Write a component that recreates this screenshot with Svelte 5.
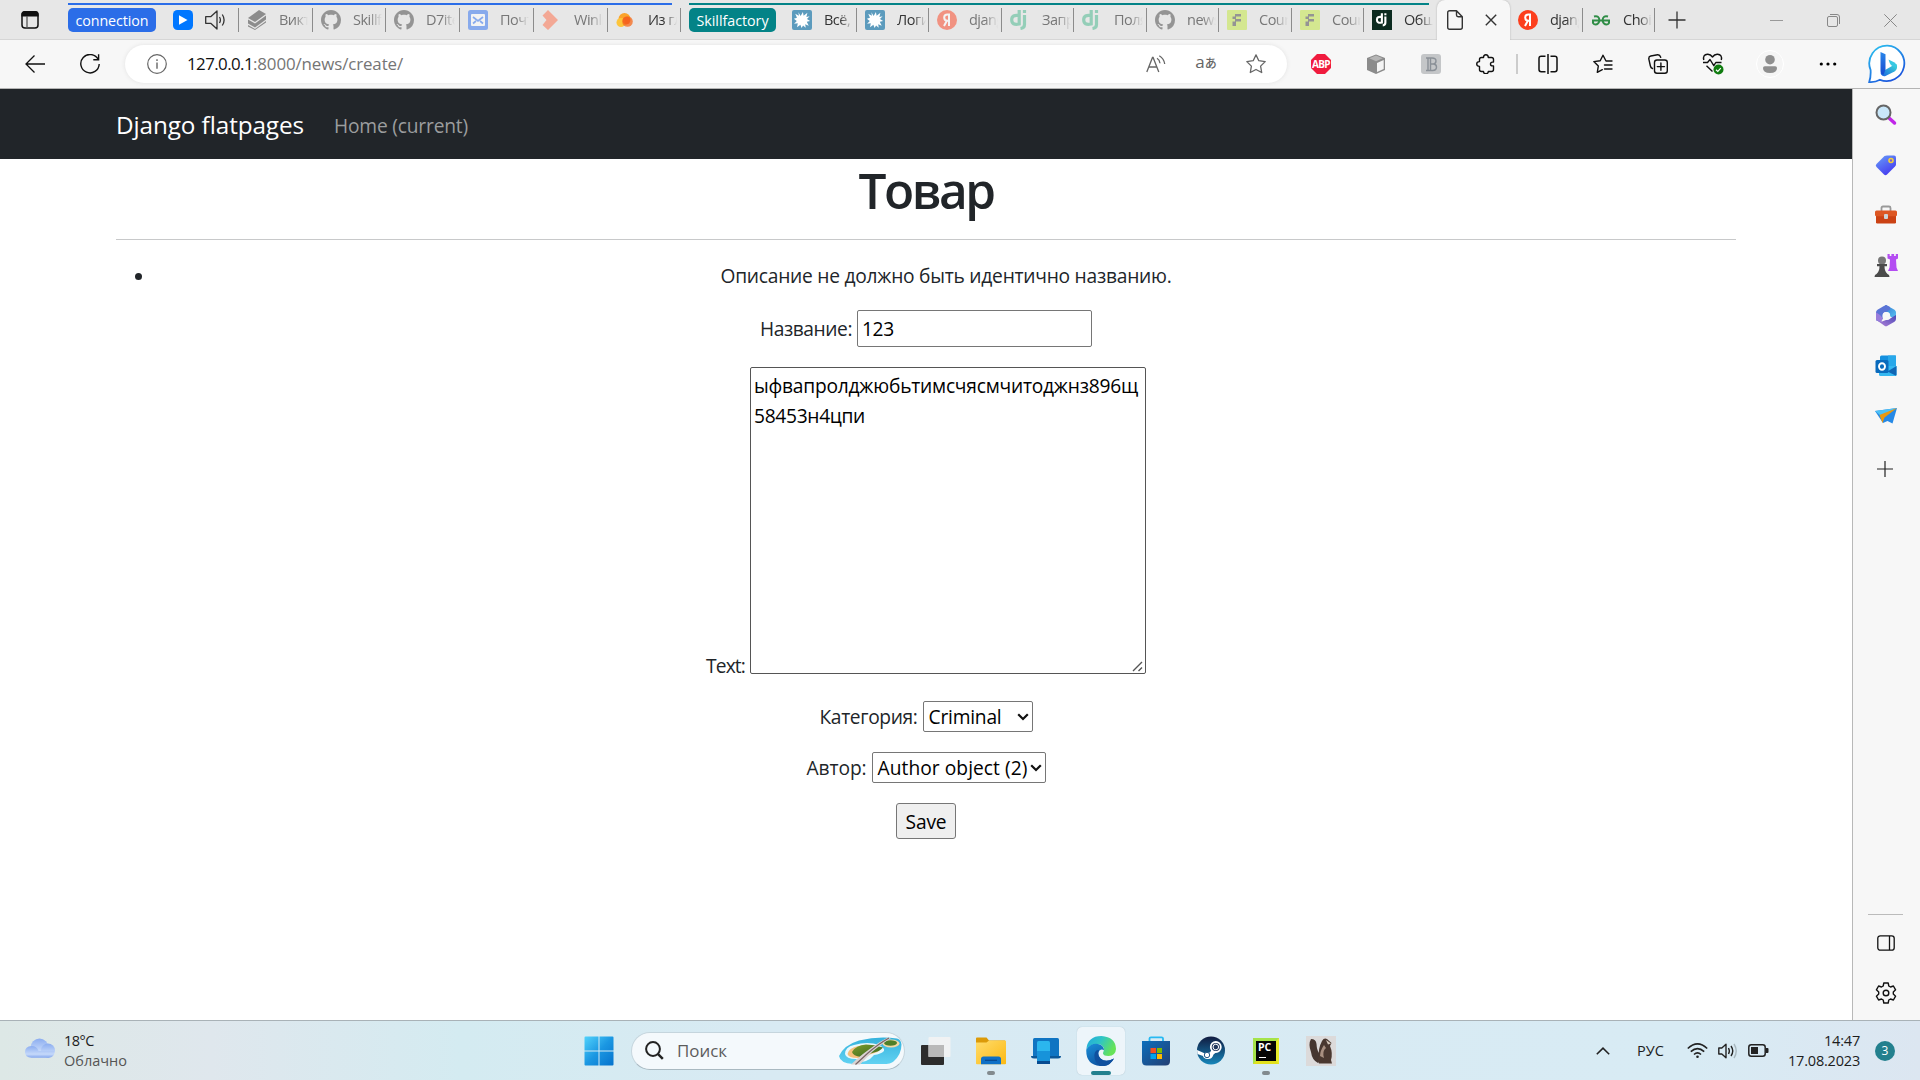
<script>
  // Spreads the letters of a label so that it takes exactly `width` pixels.
  function fit(node, width) {
    const natural = node.getBoundingClientRect().width;
    node.style.letterSpacing = (width - natural) / node.textContent.length + 'px';
  }

  const connectionTabs = [
    { icon: 'layers', text: 'Викт', width: 74, asleep: true },
    { icon: 'github', text: 'Skillf', width: 73, asleep: true },
    { icon: 'github', text: 'D7ite', width: 74, asleep: true },
    { icon: 'mail', text: 'Почт', width: 74, asleep: true },
    { icon: 'winline', text: 'Winli', width: 74, asleep: true },
    { icon: 'clouds', text: 'Из гл', width: 73 }
  ];
  const skillTabs = [
    { icon: 'splat', text: 'Всё, ч', width: 73 },
    { icon: 'splat', text: 'Логи', width: 72 },
    { icon: 'yandex', text: 'djang', width: 73, asleep: true },
    { icon: 'dj', text: 'Запр', width: 72, asleep: true },
    { icon: 'dj', text: 'Поля', width: 73, asleep: true },
    { icon: 'github', text: 'news', width: 72, asleep: true },
    { icon: 'sf', text: 'Cour', width: 73, asleep: true },
    { icon: 'sf', text: 'Cour', width: 72, asleep: true },
    { icon: 'djdark', text: 'Общи', width: 72, last: true }
  ];
  const looseTabs = [
    { icon: 'yandex', text: 'djang', width: 73 },
    { icon: 'gfg', text: 'Choic', width: 72 }
  ];
  const addressIcons = ['read', 'translate', 'star'];
  const extensions = ['abp', 'cube', 'bold', 'puzzle'];
  const tools = ['split', 'favorites', 'collections', 'heart'];
  const sidebar = ['lens', 'tag', 'briefcase', 'chess', 'm365', 'outlook', 'plane'];
  const apps = [
    { icon: 'taskview' },
    { icon: 'folder', running: true },
    { icon: 'phone' },
    { icon: 'edge', active: true },
    { icon: 'store' },
    { icon: 'steam' },
    { icon: 'pycharm', running: true },
    { icon: 'dbeaver' }
  ];
</script>

{#snippet glyph(name)}
  {#if name === 'workspace'}
    <svg width="18" height="18" viewBox="0 0 18 18"><rect x="1" y="1" width="16" height="16" rx="3" fill="none" stroke="#111" stroke-width="1.5" /><path d="M1 5V3.500Q1 .7 3.500.7h11Q17 .7 17 3.500V5z" fill="#111" stroke="#111" stroke-width="1.200" /><path d="M6 5v12" stroke="#555" stroke-width="1.300" /></svg>
  {:else if name === 'play'}
    <svg width="20" height="20" viewBox="0 0 20 20"><rect width="20" height="20" rx="4.500" fill="#07f" /><path d="M6 5.200 14.500 10 6 14.800z" fill="#fff" /></svg>
  {:else if name === 'sound'}
    <svg width="20" height="20" viewBox="0 0 20 20" fill="none" stroke="#333" stroke-width="1.300"><path d="M.7 6.700h5L12 1v18l-6.300-5.700h-5z" stroke-linejoin="round" /><path d="M14.500 7q1.800 3 0 6M17.300 4.500q3.600 5.500 0 11" /></svg>
  {:else if name === 'layers'}
    <svg width="20" height="20" viewBox="0 0 20 20" fill="#333"><path d="m1 8 11-8 7 4-11 8z" /><path d="m1 9.500 7 4L19 5.500v4L8 17.500l-7-4z" /><path d="m1 15 7 4 11-8v1.500L8 20l-7-3.500z" /></svg>
  {:else if name === 'github'}
    <svg width="20" height="20" viewBox="0 0 16 16"><path fill="#444" d="M8 0C3.580 0 0 3.580 0 8c0 3.540 2.290 6.530 5.470 7.590.4.070.55-.17.55-.38 0-.19-.01-.82-.01-1.490-2.010.37-2.530-.49-2.690-.94-.09-.23-.48-.94-.82-1.130-.28-.15-.68-.52-.01-.53.63-.01 1.080.58 1.230.82.72 1.210 1.870.87 2.330.66.07-.52.28-.87.51-1.070-1.780-.2-3.640-.89-3.640-3.950 0-.87.31-1.590.82-2.150-.08-.2-.36-1.020.08-2.120 0 0 .67-.21 2.200.82.64-.18 1.320-.27 2-.27s1.360.09 2 .27c1.530-1.040 2.200-.82 2.200-.82.44 1.100.16 1.920.08 2.120.51.56.82 1.270.82 2.150 0 3.070-1.870 3.750-3.650 3.950.29.25.54.73.54 1.480 0 1.070-.01 1.930-.01 2.200 0 .21.15.46.55.38A8.010 8.010 0 0 0 16 8c0-4.420-3.580-8-8-8z" /></svg>
  {:else if name === 'mail'}
    <svg width="20" height="20" viewBox="0 0 20 20"><rect width="20" height="20" rx="2.500" fill="#2b6ef2" /><rect x="3" y="4" width="14" height="12" rx="1" fill="#fff" /><path d="m5 7 5 4 5-4M5 13.500 8 11m7 2.500L12 11" fill="none" stroke="#2b6ef2" stroke-width="1.700" /></svg>
  {:else if name === 'winline'}
    <svg width="20" height="20" viewBox="0 0 20 20"><path d="m.5 5.500 5.500-5.500 10 10-10 10-5.500-5L4.500 10z" fill="#ff6a45" /></svg>
  {:else if name === 'clouds'}
    <svg width="20" height="20" viewBox="0 0 20 20"><circle cx="8.500" cy="9" r="6" fill="#fba32a" /><circle cx="5" cy="12.500" r="4.500" fill="#fdc53b" /><circle cx="11.500" cy="11.500" r="5.300" fill="#f66a1c" fill-opacity=".75" /><circle cx="10.500" cy="10.500" r="3.800" fill="#f4501e" fill-opacity=".5" /></svg>
  {:else if name === 'splat'}
    <svg width="20" height="20" viewBox="0 0 20 20"><rect width="20" height="20" rx="2" fill="#5c9bbd" /><path fill="#fff" transform="translate(1 1) scale(.9)" d="m6 1.500 2.500 4L11 1l.8 4.300L16 2l-1.100 4.600 3.500-.9-2.900 3.300 3.500 2-3.700 1 2.200 4.500-4-1.800.7 4-3-2.500L9.500 19l-1.300-3.600L4.500 18l.8-4.300-4.100.4 3-3.100L1 8.500l3.400-1L2.500 3l4.100 2.400z" /></svg>
  {:else if name === 'yandex'}
    <svg width="20" height="20" viewBox="0 0 20 20"><circle cx="10" cy="10" r="10" fill="#fc3f1d" /><path d="M12 16V4.500h-1.500C8.300 4.500 7.200 5.700 7.200 7.500c0 2 1.100 3.200 3.300 3.200H12M10 10.500 7 16" fill="none" stroke="#fff" stroke-width="2" /></svg>
  {:else if name === 'dj' || name === 'djdark'}
    <svg width="20" height="20" viewBox="0 0 20 20">
      {#if name === 'djdark'}<rect width="20" height="20" fill="#0c2b20" />{/if}
      <g transform={name === 'djdark' ? 'translate(3.800 3.300) scale(.66)' : ''} fill="none" stroke={name === 'djdark' ? '#fff' : '#44b78b'} stroke-width="3.200"><path d="M9.200 0v14q-7.500 1.600-7.500-4.200 0-5.500 7.500-4.200" /><path d="M14.500 5v9.500q0 3.500-4 4M14.500 0v3" /></g>
    </svg>
  {:else if name === 'sf'}
    <svg width="20" height="20" viewBox="0 0 20 20"><rect width="20" height="20" rx="1" fill="#c3e83c" /><path d="M8 4h6v2.500H8zM5.500 6.500H9V9H5.500zM8 9h6v2.500H8zM5.500 11.500H9V16H5.500z" fill="#444" /></svg>
  {:else if name === 'gfg'}
    <svg width="20" height="20" viewBox="0 0 20 20" fill="none" stroke="#2f8d46" stroke-width="2"><path d="M1 10.500h18M3 6.500q5-1.500 5.500 4-1 4-4 4T2 10.500M17 6.500q-5-1.500-5.500 4 1 4 4 4t2.500-4" /></svg>
  {:else if name === 'page'}
    <svg width="16" height="20" viewBox="0 0 16 20" fill="none" stroke="#333" stroke-width="1.400" stroke-linejoin="round"><path d="M.7 2.700Q.7.700 2.700.7H9.500l5.800 6v10.600q0 2-2 2H2.700q-2 0-2-2zM9.500.700V5q0 1.700 1.700 1.700h4" /></svg>
  {:else if name === 'close'}
    <svg width="12" height="12" viewBox="0 0 12 12"><path d="m.8.8 10.400 10.400M11.200.8.800 11.200" stroke="#333" stroke-width="1.400" /></svg>
  {:else if name === 'plus'}
    <svg width="18" height="18" viewBox="0 0 18 18"><path d="M9 .5v17M.5 9h17" stroke="#333" stroke-width="1.300" /></svg>
  {:else if name === 'back'}
    <svg width="20" height="18" viewBox="0 0 20 18" fill="none" stroke="#111" stroke-width="1.300"><path d="M20 9H1M9.500.5 1 9l8.500 8.500" /></svg>
  {:else if name === 'reload'}
    <svg width="20" height="20" viewBox="0 0 20 20" fill="none" stroke="#111" stroke-width="1.400"><path d="M18.200 5.500A9.200 9.200 0 1 0 19.200 10M18.600.3v5.400h-5.300" /></svg>
  {:else if name === 'info'}
    <svg width="20" height="20" viewBox="0 0 20 20" fill="none" stroke="#666" stroke-width="1.200"><circle cx="10" cy="10" r="9.300" /><path d="M10 8.500v6.200M10 5.300v1.700" stroke-width="1.400" /></svg>
  {:else if name === 'read'}
    <svg width="20" height="18" viewBox="0 0 20 18" fill="none" stroke="#666" stroke-width="1.300"><path d="M.8 17 6.500 2.500h.6L12.800 17M2.800 12h8M11 3.300q2.600 1.500 3 5M13.300.8q4.700 3 5.400 8.200" /></svg>
  {:else if name === 'translate'}
    <span class="translate">a<small>あ</small></span>
  {:else if name === 'star'}
    <svg width="20" height="20" viewBox="0 0 20 20" fill="none" stroke="#666" stroke-width="1.300" stroke-linejoin="round"><path d="m10 .9 2.800 5.800 6.400.9-4.600 4.500 1.100 6.400L10 15.500l-5.700 3 1.100-6.400L.8 7.600l6.400-.9z" /></svg>
  {:else if name === 'abp'}
    <span class="abp">ABP</span>
  {:else if name === 'cube'}
    <svg width="20" height="20" viewBox="0 0 20 20"><path d="m10 .4 9 3.600v12l-9 4-9-4V4z" fill="#8b8b8b" /><path d="m10 1.500 6.800 2.700L10 7.200 3.200 4.200z" fill="#b5b5b5" /><path d="m11 9 6.700-3v9l-6.700 3z" fill="#f4f4f4" /></svg>
  {:else if name === 'bold'}
    <svg width="20" height="20" viewBox="0 0 20 20"><rect width="20" height="20" rx="3" fill="#c4c6c8" /><path d="M5 4h6q4 0 4 3 0 2.500-2.500 3 3 .3 3 3 0 3.500-4 3.500H5M7 4v12.500M9.500 4v12.500M9.500 10h3" fill="none" stroke="#8a9097" stroke-width="1.400" /></svg>
  {:else if name === 'puzzle'}
    <svg width="20" height="20" viewBox="0 0 20 20" fill="none" stroke="#111" stroke-width="1.400" stroke-linejoin="round"><path d="M3.500 5.500q0-2 2-2h2q0-2.800 2.400-2.800t2.400 2.800h3.200q2 0 2 2v2.600h-1q-2 0-2 1.900t2 1.900h1v3.600q0 2-2 2h-3.200q0 2.200-2.400 2.200t-2.400-2.200h-2q-2 0-2-2v-3.100Q.7 12.400.7 10t2.800-2.400z" /></svg>
  {:else if name === 'split'}
    <svg width="20" height="20" viewBox="0 0 20 20" fill="none" stroke="#111" stroke-width="1.500"><path d="M7.500 2.200H3.200q-2.200 0-2.200 2.200v11.200q0 2.200 2.200 2.200h4.300M12.500 2.200h4.300q2.200 0 2.200 2.200v11.200q0 2.200-2.200 2.200h-4.300M10 0v20" /></svg>
  {:else if name === 'favorites'}
    <svg width="20" height="20" viewBox="0 0 20 20" fill="none" stroke="#111" stroke-width="1.400" stroke-linejoin="round" stroke-linecap="round"><path d="M19 7h-6L10 1.200 7.200 6.800.8 7.600l4.500 4.500-1 6.300 5-2.700M11.500 11H19M11.500 15H19" /></svg>
  {:else if name === 'collections'}
    <svg width="20" height="20" viewBox="0 0 20 20" fill="none" stroke="#111" stroke-width="1.400" stroke-linecap="round"><path d="M4.500 14.500Q2.800 14 2.400 12L.8 5Q.5 2.500 2.800 2L9.500.8q2.300-.3 3.200 2.500" /><rect x="6.500" y="6" width="12.800" height="13.200" rx="2.500" /><path d="M12.900 9v7.200M9.300 12.600h7.200" /></svg>
  {:else if name === 'heart'}
    <svg width="22" height="22" viewBox="0 0 22 22"><path d="M1.800 7Q.5 1.500 5.500 1.200 8.500 1 10.500 4 12.500 1 15.500 1.200 20.500 1.500 19.300 7M1 9.500h4.500l2.500-3 3.800 6.200 2-3.200h5.700M4.500 12.800l6 5.700" fill="none" stroke="#111" stroke-width="1.400" stroke-linejoin="round" /><circle cx="16.500" cy="16.500" r="5" fill="#107c10" /><path d="m14 16.700 1.800 1.700 3-3.300" fill="none" stroke="#fff" stroke-width="1.200" /></svg>
  {:else if name === 'profile'}
    <svg width="28" height="28" viewBox="0 0 28 28"><circle cx="14" cy="14" r="13.500" fill="#f5f5f5" stroke="#fff" /><circle cx="14" cy="9.700" r="4.800" fill="#8f8f8f" /><path d="M7 18q0-1.800 1.800-1.800h10.400q1.800 0 1.800 1.800 0 5-7 5t-7-5z" fill="#8f8f8f" /></svg>
  {:else if name === 'dots'}
    <svg width="18" height="4" viewBox="0 0 18 4"><circle cx="2.300" cy="2" r="1.600" /><circle cx="9" cy="2" r="1.600" /><circle cx="15.700" cy="2" r="1.600" /></svg>
  {:else if name === 'bing'}
    <svg width="40" height="40" viewBox="0 0 40 40">
      <defs><linearGradient id="bingRing" x1="0" y1="0" x2=".6" y2="1"><stop offset="0" stop-color="#2cc6f0" /><stop offset="1" stop-color="#1b55dd" /></linearGradient><linearGradient id="bingStem" x1="0" y1="0" x2="0" y2="1"><stop offset="0" stop-color="#2a86ea" /><stop offset="1" stop-color="#164bd0" /></linearGradient><linearGradient id="bingTail" x1="1" y1="0" x2="0" y2="1"><stop offset="0" stop-color="#3de0d4" /><stop offset="1" stop-color="#1b62e2" /></linearGradient></defs>
      <path d="M20.500 1.700A17.700 17.700 0 1 1 13 35.800Q8 38.500 2.200 38 4 33 3.600 26A17.700 17.700 0 0 1 20.500 1.700z" fill="#fff" stroke="url(#bingRing)" stroke-width="1.800" />
      <path d="M19 25.500 25 22l4.500-2q2 5-2 7.500L18.500 32q-3.500 1-5-3z" fill="url(#bingTail)" /><path d="m13.500 8 5 2.300v15.500l-2 5q-3-.3-3-4z" fill="url(#bingStem)" /><path d="m21.500 15.500 6 3q3 2.200 2 5.500l-5-2.500q-1.500-1-3-6z" fill="#38c8e4" />
    </svg>
  {:else if name === 'lens'}
    <svg width="22" height="22" viewBox="0 0 22 22"><path d="m14 14 5.500 5" stroke="#c026e8" stroke-width="3.500" stroke-linecap="round" /><circle cx="8.500" cy="8.500" r="7" fill="#c9e7fa" stroke="#666" stroke-width="2" /></svg>
  {:else if name === 'tag'}
    <svg width="22" height="22" viewBox="0 0 22 22"><defs><linearGradient id="tagFill" x1="0" y1="0" x2=".6" y2="1"><stop offset="0" stop-color="#68a0f8" /><stop offset="1" stop-color="#463cf0" /></linearGradient></defs><path d="M12 1.500h7q2 0 2 2v7q0 1-1 2l-8 8q-1.500 1.500-3 0l-7.500-7.500q-1.500-1.500 0-3l8-8q1-.5 2.500-.5z" fill="url(#tagFill)" /><circle cx="16" cy="6.500" r="2" fill="#7a5fd8" stroke="#f4cf3a" stroke-width="1.600" /></svg>
  {:else if name === 'briefcase'}
    <svg width="24" height="20" viewBox="0 0 24 20"><path d="M7.500 6V3Q7.500 1.500 9 1.500h6q1.500 0 1.500 1.500v3" fill="none" stroke="#999" stroke-width="1.800" /><rect x="2" y="9" width="20" height="9.500" rx="1.200" fill="#cb4214" /><rect x="1" y="5.500" width="22" height="5.800" rx="1.500" fill="#dd5723" /><rect x="10" y="9" width="4" height="5" rx="1" fill="#ccd3d5" /></svg>
  {:else if name === 'chess'}
    <svg width="24" height="24" viewBox="0 0 24 24"><path d="M13.500 0h2.200v2h1.700V0h2.700v2h1.700V0H24v4.500l-2 1 .5 8L24 17H14l1.500-3.500.5-8-2.500-1z" fill="#b44df2" /><circle cx="8" cy="6.500" r="4" fill="#777" /><path d="M3 10h10v2.200h-2.500q0 5 3 7.800 2 .5 2 3H.5q0-2.500 2-3 3-2.800 3-7.800H3z" fill="#4b4b4b" /></svg>
  {:else if name === 'm365'}
    <svg width="22" height="24" viewBox="0 0 22 24">
      <defs><linearGradient id="ringBlue" x1="0" y1="0" x2="1" y2="1"><stop offset="0" stop-color="#2f6fd0" /><stop offset="1" stop-color="#5cc8f2" /></linearGradient><linearGradient id="ringViolet" x1="0" y1="1" x2="1" y2="0"><stop offset="0" stop-color="#b583d8" /><stop offset="1" stop-color="#4a48b8" /></linearGradient></defs>
      <path d="m11 1 8.500 4.800q1.500 1 1.500 2.500v7.500l-6-3.500V11q-.5-3-4-3L7 4z" fill="url(#ringBlue)" />
      <path d="M11 1 8 2.500 2.500 5.800Q1 6.800 1 8.300v8l3 1.200 4-3V11q.5-3 3-3l4-2.500V3z" fill="#5b74d6" />
      <path d="m1 15.700 8.500 6q1.500 1 3 0l7-4q1.500-1 1.500-3V11l-5 3q-1.500 2-5 2l-4 1.500z" fill="url(#ringViolet)" />
      <path d="m1 8.300 4 2.700 3 3.500-2 3.500L1 16z" fill="#9a7ddb" />
      <circle cx="11.300" cy="12" r="3.900" fill="#f7f7f7" />
    </svg>
  {:else if name === 'outlook'}
    <svg width="22" height="22" viewBox="0 0 22 22"><path d="M5 2q0-1.500 1.500-1.500h13.700Q21 .5 21 2v9H5z" fill="#1490df" /><path d="M13 .5h8V11h-8z" fill="#28a8ea" /><path d="M4 11h17.500v8.500q0 1.500-1.500 1.500H5.500Q4 21 4 19.500z" fill="#35b8f1" /><path d="m21.500 11-9 5.500 8.500 4.300q.5-.3.500-1.300z" fill="#1066b5" /><rect x=".5" y="5" width="13" height="13" rx="1.500" fill="#0a6bbd" /><ellipse cx="7" cy="11.500" rx="3" ry="3.300" fill="none" stroke="#fff" stroke-width="1.900" /></svg>
  {:else if name === 'plane'}
    <svg width="22" height="18" viewBox="0 0 22 18"><path d="M0 4 22 1l-4.500 15.500-5-2.500-4.500 2z" fill="#2689e6" /><path d="m0 4 22-3L6 9z" fill="#4cc1f5" /><path d="M22 1 4.500 8 7.500 16l2-5.500z" fill="#e9980f" /></svg>
  {:else if name === 'add'}
    <svg width="16" height="16" viewBox="0 0 16 16"><path d="M8 0v16M0 8h16" stroke="#222" stroke-width="1.200" /></svg>
  {:else if name === 'panel'}
    <svg width="18" height="16" viewBox="0 0 18 16" fill="none" stroke="#111" stroke-width="1.300"><rect x=".8" y=".8" width="16.400" height="14.400" rx="2.500" /><path d="M12.500 1v14" /></svg>
  {:else if name === 'gear'}
    <svg width="22" height="22" viewBox="0 0 22 22" fill="none" stroke="#111" stroke-width="1.400" stroke-linejoin="round"><path d="M8.800 1h4.400l.6 3 1.700 1 2.900-1 2.200 3.800-2.300 2.100v2.200l2.300 2.100-2.200 3.800-2.900-1-1.700 1-.6 3H8.800l-.6-3-1.700-1-2.900 1-2.200-3.800 2.300-2.100V9.900L1.400 7.800 3.600 4l2.900 1 1.700-1z" /><circle cx="11" cy="11" r="2.800" /></svg>
  {:else if name === 'cloud'}
    <svg width="30" height="20" viewBox="0 0 30 20"><defs><linearGradient id="cloudFill" x1="0" y1="0" x2="0" y2="1"><stop offset="0" stop-color="#8cadf0" /><stop offset=".7" stop-color="#c5d9fa" /><stop offset="1" stop-color="#84a7ee" /></linearGradient></defs><circle cx="14.500" cy="9.500" r="9" fill="url(#cloudFill)" /><circle cx="23" cy="12.500" r="7" fill="url(#cloudFill)" /><path d="M6.500 8q5.500 0 7 5h16q0 6.700-6 6.700h-17Q0 19.700 0 14t6.500-6z" fill="url(#cloudFill)" /></svg>
  {:else if name === 'windows'}
    <svg width="30" height="30" viewBox="0 0 30 30"><defs><linearGradient id="winFill" gradientUnits="userSpaceOnUse" x1="0" y1="0" x2="30" y2="30"><stop offset="0" stop-color="#53d4fc" /><stop offset=".5" stop-color="#1b97e2" /><stop offset="1" stop-color="#0471cc" /></linearGradient></defs><path d="M.500 1.500q0-1 1-1h13v14h-14zm15-1h13q1 0 1 1v13h-14zM.5 15.500h14v14h-13q-1 0-1-1zm15 0h14v13q0 1-1 1h-13z" fill="url(#winFill)" /></svg>
  {:else if name === 'search'}
    <svg width="19" height="19" viewBox="0 0 19 19" fill="none" stroke="#222" stroke-width="2"><circle cx="8" cy="8" r="6.900" /><path d="m12.800 12.800 5 5" stroke-width="2.500" /></svg>
  {:else if name === 'island'}
    <svg width="63" height="28" viewBox="0 0 63 28">
      <defs><linearGradient id="sea" x1="0" y1="0" x2="0" y2="1"><stop offset="0" stop-color="#35b2dc" /><stop offset="1" stop-color="#62d2f2" /></linearGradient><linearGradient id="grove" x1="0" y1="0" x2="1" y2="1"><stop offset="0" stop-color="#7f9d2c" /><stop offset="1" stop-color="#2f6320" /></linearGradient></defs>
      <path d="M0 19Q5 8 20 3.500 40-1.500 58 1.500q4 1 4.500 6 0 10-8 17Q52 27.500 40 27H14Q1 26 0 19z" fill="url(#sea)" />
      <path d="M6 17q0-7 9-9 14-4 25 0 6 3 5 6-3 3-10 4-3 4-8 6-6 2-10-2-10 0-11-5z" fill="#eaf8fb" />
      <path d="M8.500 17q1-6 11-8 11-2 20 2 3 3-4 5-5 1-8 4-4 4-9 1-9 0-10-4z" fill="#f6c07c" />
      <path d="M13 15q4-7 14-7.500 9 0 17 3-3 4-11 5.500-6 3-11 4-8-1-9-5z" fill="url(#grove)" />
      <ellipse cx="52" cy="6.500" rx="8.500" ry="4" fill="#f3d9a4" /><ellipse cx="51.500" cy="6" rx="6.500" ry="2.700" fill="#4f7f28" />
      <path d="M12 27.500Q22 18 30 12.500 40 5 48 1h4Q40 9 33 15L21 27.500z" fill="#d9d3d2" /><path d="M16.500 27.500 29 16Q40 6.500 50 1" fill="none" stroke="#7a6465" stroke-width="1.200" />
    </svg>
  {:else if name === 'taskview'}
    <svg width="30" height="30" viewBox="0 0 30 30"><rect y="9" width="23" height="20" rx="1" fill="#2c2c2c" /><rect x="7.500" y="1" width="22" height="20" rx="1" fill="#f3f3f3" fill-opacity=".9" /><path d="M7.500 9H23v12H7.500z" fill="#b9b9b9" /></svg>
  {:else if name === 'folder'}
    <svg width="30" height="28" viewBox="0 0 30 28"><defs><linearGradient id="folderFill" x1="0" y1="0" x2="1" y2="1"><stop offset="0" stop-color="#ffdc6c" /><stop offset="1" stop-color="#fcb913" /></linearGradient></defs><path d="M0 1.500Q0 .5 1 .5h9.500L13 3.500h16v6H0z" fill="#dc9a08" /><path d="M0 5.500h10.500L13 3.500h16q1 0 1 1v22q0 .8-1 .8H1q-1 0-1-.8z" fill="url(#folderFill)" /><path d="M5 27.200V22q0-2.500 2.500-2.500h15Q25 19.500 25 22v5.200z" fill="#0f70c6" /><path d="M9 23.300h12" stroke="#08488e" stroke-width="1.200" /></svg>
  {:else if name === 'phone'}
    <svg width="30" height="28" viewBox="0 0 30 28"><rect x="2" y="1" width="26" height="20" rx="1.500" fill="#0f74c2" /><path d="M0 19h30q0 2.500-3 2.500H3q-3 0-3-2.500z" fill="#0c5798" /><rect x="6" y="4" width="13" height="23" rx="1.500" fill="#2bb6ee" /><path d="M6 14h13v10H6z" fill="#1793da" /><path d="M6 24h13v3H6z" fill="#074b91" /></svg>
  {:else if name === 'edge'}
    <svg width="30" height="30" viewBox="0 0 30 30"><defs><linearGradient id="edgeTop" x1="0" y1="0" x2="1" y2=".4"><stop offset="0" stop-color="#22a7e0" /><stop offset=".5" stop-color="#2fc5c5" /><stop offset="1" stop-color="#66e358" /></linearGradient><linearGradient id="edgeLow" x1="0" y1="0" x2=".6" y2="1"><stop offset="0" stop-color="#1a8fd8" /><stop offset="1" stop-color="#0d4f9e" /></linearGradient></defs><path d="M.3 13.500Q1.500 0 15.500 0 29.500 1 30 13q-.3 6.500-7.500 7-5 0-5.500-2.500 0-1.500 1-3 .5-5.500-6-6.500Q4.500 7.500.3 13.500z" fill="url(#edgeTop)" /><path d="M.3 13.500Q4.500 7 12 8q6 1 6 6.500-2-2-4.500 0-3 4 1 8 5 4.500 13.500 0-4.500 8.500-14 7.500Q-.5 28.500.3 13.500z" fill="url(#edgeLow)" /><path d="M8.500 18q1-4.500 4.500-4-2 4.500 1.500 8.500 5 4.500 13.500 0-4.500 8.500-13 7.500-7.500-3-6.500-12z" fill="#0f509f" /></svg>
  {:else if name === 'store'}
    <svg width="30" height="30" viewBox="0 0 30 30"><defs><linearGradient id="storeFill" x1="0" y1="0" x2="1" y2="1"><stop offset="0" stop-color="#0b6fbd" /><stop offset="1" stop-color="#243f73" /></linearGradient></defs><path d="M8.500 6V2.500Q8.500 1.300 10 1.300h10.500Q22 1.300 22 2.500V6" fill="none" stroke="#27b9f2" stroke-width="1.800" /><path d="M1 5h28v20q0 4.500-4.500 4.500h-19Q1 29.500 1 25z" fill="url(#storeFill)" /><path d="M9.500 12H15v5H9.500z" fill="#f25022" /><path d="M16 12h5v5h-5z" fill="#7fba00" /><path d="M9.500 18H15v5H9.500z" fill="#00a4ef" /><path d="M16 18h5v5h-5z" fill="#ffb900" /></svg>
  {:else if name === 'steam'}
    <svg width="30" height="30" viewBox="0 0 30 30"><defs><linearGradient id="steamFill" x1="0" y1="0" x2="0" y2="1"><stop offset="0" stop-color="#111b40" /><stop offset="1" stop-color="#1686ba" /></linearGradient></defs><circle cx="15" cy="14.500" r="14" fill="url(#steamFill)" /><path d="m1 14 8 3.500 5-1 3-5.500 6 3-5.500 4.500q-1.500 5-6 4.500-4-.5-4.500-3L1.500 18z" fill="#fff" /><circle cx="19.800" cy="11" r="5" fill="#20365c" stroke="#fff" stroke-width="1.800" /><circle cx="19.800" cy="11" r="2.800" fill="none" stroke="#fff" stroke-width="1" /><circle cx="11" cy="19" r="2.700" fill="#fff" stroke="#265987" stroke-width="1" /></svg>
  {:else if name === 'pycharm'}
    <span class="pycharm">PC</span>
  {:else if name === 'dbeaver'}
    <svg width="30" height="30" viewBox="0 0 30 30"><path d="M0 0h30v30H0z" fill="#dcdada" /><path d="M5 3q5 0 5.500 5 .3 6 2.500 9 2.500 5-1 10-6-3-7-11Q2 8 5 3z" fill="#453630" /><path d="M16 5q2-3.500 5-2l4.500 4-1.500 3q3 7 1 14l1 3.500H13q-2-3 0-7-1-8 3-15.500z" fill="#4a3830" /><path d="M18 9q-4 6-4 11l4 2q-2-7 2-10z" fill="#a99081" /><path d="m20 4 5 3.500-3 1z" fill="#d6c9bc" /></svg>
  {:else if name === 'wifi'}
    <svg width="21" height="16" viewBox="0 0 21 16" fill="none" stroke="#222" stroke-width="1.600"><path d="M.8 5.500q9.700-9.300 19.400 0M3.800 8.700q6.700-6.300 13.400 0M7 11.500q3.500-3.200 7 0" /><circle cx="10.500" cy="13.700" r="1.300" fill="#222" stroke="none" /></svg>
  {:else if name === 'volume'}
    <svg width="20" height="16" viewBox="0 0 20 16" fill="none" stroke="#222" stroke-width="1.400"><path d="M.8 5h3L8 1.200v13.600L3.800 11h-3z" stroke-linejoin="round" /><path d="M10.500 5q1.700 3 0 6M13 3q3.500 5 0 10" /><path d="M16 1q4.500 7 0 14" stroke="#a9b8bf" /></svg>
  {:else if name === 'battery'}
    <svg width="21" height="13" viewBox="0 0 21 13"><rect x=".8" y=".8" width="16.400" height="11.400" rx="2.500" fill="none" stroke="#222" stroke-width="1.500" /><path d="M3 3h7v7H3zM18 4h1.500q1 0 1 1v3q0 1-1 1H18z" fill="#222" /></svg>
  {/if}
{/snippet}

{#snippet tab(t)}
  <div class="tab" class:asleep={t.asleep} class:last={t.last} style:width="{t.width}px">
    <span class="favicon">{@render glyph(t.icon)}</span>
    <span class="tab-text">{t.text}</span>
  </div>
{/snippet}

<div class="screen">
  <header class="tabs">
    <div class="workspace">{@render glyph('workspace')}</div>
    <div class="group blue">
      <span class="pill"><span use:fit={73}>connection</span></span>
      <div class="playing">{@render glyph('play')}{@render glyph('sound')}</div>
      {#each connectionTabs as t}{@render tab(t)}{/each}
    </div>
    <div class="group teal">
      <span class="pill"><span use:fit={72}>Skillfactory</span></span>
      {#each skillTabs as t}{@render tab(t)}{/each}
    </div>
    <div class="active-tab">{@render glyph('page')}{@render glyph('close')}</div>
    {#each looseTabs as t}{@render tab(t)}{/each}
    <div class="new-tab">{@render glyph('plus')}</div>
    <div class="window-buttons">
      <svg width="13" height="13" viewBox="0 0 13 13"><path d="M0 6.500h13" stroke="#999" /></svg>
      <svg width="13" height="13" viewBox="0 0 13 13" fill="none" stroke="#888"><rect x=".5" y="2.500" width="10" height="10" rx="1.500" /><path d="M3 .5h7q2.500 0 2.500 2.500v7" /></svg>
      <svg width="13" height="13" viewBox="0 0 13 13"><path d="m.3.3 12.400 12.400M12.700.3.300 12.700" stroke="#888" /></svg>
    </div>
  </header>

  <div class="toolbar">
    <span class="nav-slot">{@render glyph('back')}</span>
    <span class="nav-slot">{@render glyph('reload')}</span>
    <div class="address">
      {@render glyph('info')}
      <span class="url"><b use:fit={66}>127.0.0.1</b><span use:fit={150}>:8000/news/create/</span></span>
      {#each addressIcons as name}<span class="address-slot">{@render glyph(name)}</span>{/each}
    </div>
    {#each extensions as name}<span class="tool-slot">{@render glyph(name)}</span>{/each}
    <span class="divider"></span>
    {#each tools as name}<span class="tool-slot">{@render glyph(name)}</span>{/each}
    <span class="profile-slot">{@render glyph('profile')}</span>
    <span class="more-slot">{@render glyph('dots')}</span>
    <span class="bing-slot">{@render glyph('bing')}</span>
  </div>

  <div class="middle">
    <main class="page">
      <nav class="navbar">
        <span class="brand"><span use:fit={188}>Django flatpages</span></span>
        <span class="home"><span use:fit={134}>Home (current)</span></span>
      </nav>
      <div class="container">
        <h1><span use:fit={135}>Товар</span></h1>
        <hr />
        <ul><li><span use:fit={451}>Описание не должно быть идентично названию.</span></li></ul>
        <form>
          <div class="row title-row"><label for="title" use:fit={92}>Название:</label><input id="title" value="123" /></div>
          <div class="row text-row">
            <label for="text" use:fit={39}>Text:</label>
            <div class="textarea">
              <div class="content" id="text"><span use:fit={384}>ыфвапролджюбьтимсчясмчитоджнз896щ</span><br /><span use:fit={111}>58453н4цпи</span></div>
              <svg class="grip" width="12" height="12" viewBox="0 0 12 12"><path d="m1 11 9-9M6.500 11 10 7.500" stroke="#555" stroke-width="1.400" /></svg>
            </div>
          </div>
          <div class="row"><label for="cat" use:fit={98}>Категория:</label><div class="select" id="cat"><span use:fit={73}>Criminal</span><svg class="arrow" width="12" height="8" viewBox="0 0 12 8"><path d="m1.200 1.200 4.800 4.800 4.800-4.800" fill="none" stroke="#111" stroke-width="2.200" /></svg></div></div>
          <div class="row"><label for="author" use:fit={60}>Автор:</label><div class="select wide" id="author"><span use:fit={150}>Author object (2)</span><svg class="arrow" width="12" height="8" viewBox="0 0 12 8"><path d="m1.200 1.200 4.800 4.800 4.800-4.800" fill="none" stroke="#111" stroke-width="2.200" /></svg></div></div>
          <div class="row"><button type="button"><span use:fit={41}>Save</span></button></div>
        </form>
      </div>
    </main>
    <aside class="sidebar">
      {#each sidebar as name}<span class="side-slot">{@render glyph(name)}</span>{/each}
      <span class="side-slot add">{@render glyph('add')}</span>
      <span class="side-bottom"><span class="side-slot">{@render glyph('panel')}</span><span class="side-slot">{@render glyph('gear')}</span></span>
    </aside>
  </div>

  <footer class="taskbar">
    <div class="weather">{@render glyph('cloud')}<div><div class="line"><span use:fit={30}>18°C</span></div><div class="line dim"><span use:fit={63}>Облачно</span></div></div></div>
    <span class="start">{@render glyph('windows')}</span>
    <div class="search">{@render glyph('search')}<span class="search-text"><span use:fit={50}>Поиск</span></span>{@render glyph('island')}</div>
    <div class="apps">
      {#each apps as app}
        <span class="app" class:active={app.active} class:running={app.running}>{@render glyph(app.icon)}</span>
      {/each}
    </div>
    <div class="tray">
      <svg width="14" height="8" viewBox="0 0 14 8"><path d="m.8 7.200 6.200-6 6.200 6" fill="none" stroke="#222" stroke-width="1.600" /></svg>
      <span class="lang"><span use:fit={27}>РУС</span></span>
      {@render glyph('wifi')}
      {@render glyph('volume')}
      {@render glyph('battery')}
      <div class="clock"><div class="line"><span use:fit={36}>14:47</span></div><div class="line"><span use:fit={72}>17.08.2023</span></div></div>
      <span class="badge">3</span>
    </div>
  </footer>
</div>

<style>
  :global(body) { overflow: hidden; }
  .screen { width: 1920px; height: 1080px; display: flex; flex-direction: column; font-family: "Open Sans", "Noto Sans", sans-serif; background: #fff; overflow: hidden; }
  .screen span[style], label, b { display: inline-block; white-space: pre; }
  svg { display: block; flex: none; }

  .tabs { height: 40px; display: flex; align-items: center; background: #e7e7e7; box-shadow: inset 0 -1px #d6d6d6; flex: none; }
  .workspace { width: 68px; box-sizing: border-box; padding-left: 21px; }
  .group { display: flex; align-items: center; height: 40px; position: relative; }
  .group::before { content: ""; position: absolute; left: 0; top: 3px; height: 2px; width: 604px; background: #2b6de8; }
  .group.blue { width: 621px; }
  .group.teal { width: 748px; }
  .group.teal::before { width: 740px; background: #038387; }
  .pill { height: 24px; width: 88px; border-radius: 5px; background: #2b6de8; color: #fff; font-size: 14.300px; display: flex; align-items: center; justify-content: center; flex: none; }
  .teal .pill { width: 87px; background: #038387; margin-right: 8px; }
  .playing { width: 83px; height: 24px; padding-left: 17px; display: flex; align-items: center; gap: 12px; box-sizing: border-box; border-right: 1px solid #8c8c8c; flex: none; }
  .tab { height: 24px; box-sizing: border-box; border-right: 1px solid #8c8c8c; display: flex; align-items: center; padding-left: 8px; overflow: hidden; flex: none; color: #333; }
  .tab.last { border: 0; }
  .favicon { width: 20px; display: flex; justify-content: center; flex: none; }
  .asleep .favicon { opacity: .5; }
  .asleep { color: #777; }
  .tab-text { margin-left: 12px; width: 29px; overflow: hidden; white-space: pre; font-size: 14.500px; line-height: 22px; padding-bottom: 1px; letter-spacing: -.5px; -webkit-mask-image: linear-gradient(90deg, #000 55%, transparent); mask-image: linear-gradient(90deg, #000 55%, transparent); }
  .active-tab { width: 73px; height: 40px; box-sizing: border-box; background: #f7f7f7; border-radius: 8px 8px 0 0; display: flex; align-items: center; padding-left: 10px; gap: 22px; box-shadow: 0 0 2px #aaa; clip-path: inset(0 -3px); flex: none; }
  .new-tab { width: 115px; box-sizing: border-box; padding-left: 13px; }
  .window-buttons { display: flex; gap: 44px; }

  .toolbar { height: 48px; display: flex; align-items: center; background: #f7f7f7; border-bottom: 1px solid #b4b4b4; padding-left: 10px; flex: none; }
  .toolbar span { flex: none; }
  .nav-slot, .address-slot, .tool-slot, .profile-slot, .more-slot, .bing-slot { display: flex; justify-content: center; align-items: center; }
  .nav-slot { width: 50px; margin-right: 5px; }
  .nav-slot:first-child { width: 49px; margin-right: 6px; }
  .address { width: 1162px; height: 38px; box-sizing: border-box; margin: 0 6px 0 5px; padding: 0 6px 0 22px; border-radius: 19px; background: #fff; box-shadow: 0 0 4px #e2e2e2; display: flex; align-items: center; flex: none; }
  .url { margin: 0 auto 0 20px; padding-bottom: 2px; font-size: 16.900px; color: #757575; white-space: nowrap; font-weight: 400; }
  .url b { color: #111; font-weight: 400; }
  .address-slot { width: 50px; }
  .tool-slot { width: 55px; }
  .divider { width: 2px; height: 20px; margin: 0 2px 0 3px; background: #ccc; }
  .profile-slot { width: 60px; }
  .more-slot { width: 55px; }
  .bing-slot { width: 64px; }
  .translate { color: #666; font-size: 17px; line-height: 20px; padding-bottom: 2px; font-family: "Open Sans", "Noto Sans CJK JP", sans-serif; }
  .translate small { font-size: 12px; font-weight: 500; }
  .abp { width: 20px; height: 20px; margin-left: 1px; background: #f01b3e; color: #fff; font-weight: 700; font-size: 10px; line-height: 20px; text-align: center; letter-spacing: -.7px; clip-path: polygon(30% 0, 70% 0, 100% 30%, 100% 70%, 70% 100%, 30% 100%, 0 70%, 0 30%); }

  .middle { flex: 1; display: flex; min-height: 0; }
  .page { width: 1852px; color: #212529; font-size: 19.200px; }
  .navbar { height: 70px; background: #212529; display: flex; align-items: center; padding: 2px 0 0 116px; box-sizing: border-box; }
  .brand { width: 218px; color: #fff; font-size: 24.300px; padding-bottom: 1px; }
  .home { color: #9b9d9e; }
  .container { width: 1620px; margin: 0 auto; }
  h1 { margin: 0; height: 80px; line-height: 63px; font-size: 49.500px; font-weight: 600; text-align: center; }
  hr { margin: 0; border: 0; height: 1px; background: #c8c9ca; }
  ul { margin: 21px 0 19px; padding-left: 40px; text-align: center; list-style: none; }
  li { line-height: 30px; height: 30px; position: relative; }
  li::before { content: ""; position: absolute; left: -21px; top: 12px; width: 7px; height: 7px; border-radius: 50%; background: #212529; }
  .row { display: flex; justify-content: center; align-items: center; gap: 5px; margin-bottom: 20px; line-height: 30px; }
  .row label { flex: none; padding-top: 1px; }
  .row.title-row { height: 37px; }
  .row.title-row label { padding-top: 0; }
  input { width: 235px; height: 37px; box-sizing: border-box; border: 1px solid #767676; border-radius: 2px; padding: 1px 4px; font: inherit; letter-spacing: -.4px; color: #000; }
  .text-row { align-items: flex-end; margin-bottom: 27px; }
  .row.text-row label { line-height: 16px; height: 16px; padding: 0; }
  .textarea { width: 396px; height: 307px; box-sizing: border-box; border: 1px solid #555; border-radius: 2px; padding: 3px; color: #000; position: relative; }
  .grip { position: absolute; right: 1px; bottom: 1px; }
  .row:has(.select) { height: 31px; }
  .select { width: 110px; height: 31px; box-sizing: border-box; border: 1px solid #767676; border-radius: 2px; padding: 1px 3px 0 5px; color: #000; display: flex; align-items: center; justify-content: space-between; }
  .wide { width: 174px; }
  .select .arrow { margin-bottom: 1px; }
  button { width: 60px; height: 36px; border: 1px solid #767676; border-radius: 3px; background: #efefef; font: inherit; color: #000; padding: 2px 0 0; display: flex; align-items: center; justify-content: center; }

  .sidebar { width: 68px; box-sizing: border-box; border-left: 1px solid #b8b8b8; background: #f7f7f7; display: flex; flex-direction: column; align-items: center; flex: none; padding: 1px 2px 0 0; }
  .side-slot { height: 50.200px; display: flex; align-items: center; flex: none; }
  .side-slot.add { height: 56px; padding-right: 1px; }
  .side-bottom { margin-top: auto; width: 35px; height: 106px; border-top: 1px solid #bbb; display: flex; flex-direction: column; align-items: center; padding-top: 3px; box-sizing: border-box; }

  .taskbar { height: 59px; box-sizing: content-box; border-top: 1px solid #a9b2b7; display: flex; align-items: center; flex: none; background: linear-gradient(90deg, #dde8e6 0, #dfe7ed 11%, #d4ebf1 24%, #d8eaf3 40%, #d8ebf4 88%, #dce6f1 100%); }
  .weather { width: 559px; box-sizing: content-box; padding-left: 25px; display: flex; align-items: center; gap: 9px; font-size: 14.500px; color: #1d1d1d; }
  .weather > :global(svg) { margin-bottom: 6px; }
  .line { height: 20px; line-height: 20px; }
  .dim { color: #555; }
  .start { width: 47px; }
  .search { width: 274px; height: 38px; box-sizing: border-box; border: 1px solid #c5d5dd; border-bottom-color: #a9b9c1; border-radius: 19px; background: #f4f9fc; display: flex; align-items: center; padding: 0 2px 0 13px; }
  .search-text { margin: 0 auto 0 13px; font-size: 16.900px; color: #5c5c5c; }
  .apps { display: flex; gap: 7px; margin-left: 7px; }
  .app { width: 48px; height: 48px; border-radius: 5px; display: flex; align-items: center; justify-content: center; position: relative; }
  .app.active { background: #edf5fa; box-shadow: 0 0 1px #9fb5c0; }
  .app.running::after, .app.active::after { content: ""; position: absolute; bottom: 0; width: 8px; height: 4px; border-radius: 2px; background: #828a8e; }
  .app.active::after { width: 20px; background: #23808e; }
  .pycharm { width: 26px; height: 26px; box-sizing: border-box; border: 3px solid #a5e34a; border-right-color: #e8ec2b; border-bottom-color: #e2e01e; background: #050505; color: #fff; font-weight: 700; font-size: 10.500px; line-height: 13px; padding-left: 2px; position: relative; }
  .pycharm::after { content: ""; position: absolute; left: 3px; bottom: 3px; width: 7px; height: 1px; background: #fff; }
  .tray { margin-left: 251px; display: flex; align-items: center; font-size: 14.500px; color: #1d1d1d; }
  .lang { margin: 0 23px 0 27px; }
  .tray :global(svg + svg) { margin-left: 10px; }
  .clock { width: 91px; text-align: right; }
  .badge { width: 20px; height: 20px; border-radius: 50%; background: #23808e; color: #fff; text-align: center; line-height: 20px; font-size: 12px; margin-left: 15px; }
</style>
